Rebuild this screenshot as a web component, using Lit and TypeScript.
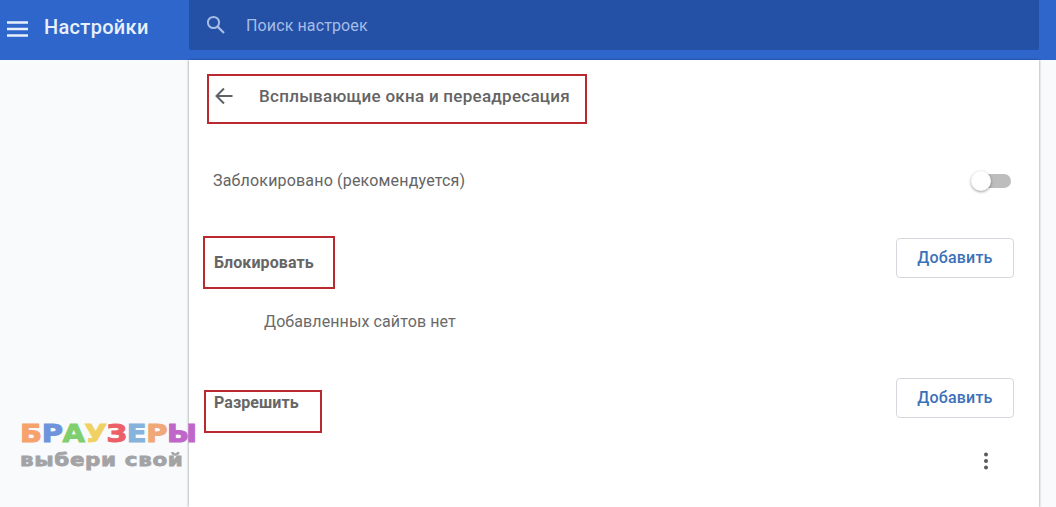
import { LitElement, html, css } from "lit";
import { customElement } from "lit/decorators.js";

const LETTERS: [string, string][] = [
  ["Б", "#f5a26b"], ["Р", "#6f94dc"], ["А", "#7fcf6f"], ["У", "#f0d264"],
  ["З", "#ec5f68"], ["Е", "#86b3dc"], ["Р", "#f0a878"], ["Ы", "#bf66c8"],
];

@customElement("app-root")
export class AppRoot extends LitElement {
  static styles = css`
    :host { display: block; width: 1056px; height: 507px; overflow: hidden; position: relative; background: #f8fafb; font-family: Roboto, "Liberation Sans", sans-serif; color: #646464; }
    .top { height: 60px; background: #2f66cb; display: flex; color: #fff; }
    .brand { width: 189px; display: flex; align-items: flex-start; box-sizing: border-box; padding: 16px 0 0 7px; gap: 15px; font-size: 20px; font-weight: 500; line-height: 22px; letter-spacing: 0.32px; color: #e8f0fc; }
    .brand svg { margin-top: 4px; display: block; }
    .search { width: 850px; height: 50px; background: #2450a6; border-radius: 0 0 2px 2px; display: flex; align-items: center; padding-left: 15px; gap: 18px; box-sizing: border-box; color: #a6bde6; font-size: 16px; letter-spacing: 0.12px; }
    .search svg { display: block; margin-left: -1px; margin-right: 1px; }
    .card { margin-left: 189px; width: 850px; height: 447px; background: #fff; box-shadow: -1px 0 2px rgba(0,0,0,.22), 1px 0 2px rgba(0,0,0,.22); box-sizing: border-box; display: flex; flex-direction: column; padding: 0 25px 0 25px; }
    .sub { height: 72px; display: flex; align-items: center; gap: 24px; font-size: 17px; font-weight: 500; letter-spacing: 0.27px; flex: none; }
    .sub svg { display: block; margin: -1px 0 0 -1px; }
    .row { display: flex; align-items: center; justify-content: space-between; flex: none; }
    .toggle-row { height: 42px; margin-top: 28px; font-size: 16px; letter-spacing: 0.18px; margin-left: -1px; }
    .toggle-row span { margin-top: -2px; }
    .switch { position: relative; width: 34px; height: 14px; border-radius: 7px; background: #bdbdbd; margin-right: 3px; }
    .knob { position: absolute; left: -6px; top: -3px; width: 20px; height: 20px; border-radius: 50%; background: #fff; box-shadow: 0 1px 3px rgba(0,0,0,.4); }
    .sec-a { margin-top: 36px; height: 40px; }
    .sec-b { height: 40px; }
    .sec-title { font-size: 16px; font-weight: 700; letter-spacing: 0.08px; color: #666; margin-top: 8px; }
    button { width: 118px; height: 40px; background: #fff; border: 1px solid #d4d8dd; border-radius: 4px; color: #3b71b8; font: 500 16px Roboto, "Liberation Sans", sans-serif; letter-spacing: 0.2px; padding: 0 0 2px; }
    .empty { height: 100px; flex: none; display: flex; align-items: center; padding: 0 0 14px 50px; font-size: 16px; letter-spacing: 0.1px; box-sizing: border-box; color: #6a6a6a; }
    .menu { display: flex; justify-content: flex-end; padding-right: 25px; margin-top: 34px; flex: none; }
    .menu svg { display: block; }
    .redbox { position: absolute; border: 2px solid #b92a30; box-sizing: border-box; }
    .r1 { left: 207px; top: 74px; width: 380px; height: 50px; }
    .r2 { left: 203px; top: 236px; width: 132px; height: 53px; }
    .r3 { left: 204px; top: 390px; width: 118px; height: 43px; }
    .mark { position: absolute; left: 20px; top: 419px; font-family: "DejaVu Sans", sans-serif; font-weight: 700; transform: scaleX(1.16); transform-origin: left top; }
    .mark .l1 { font-size: 25px; line-height: 29px; letter-spacing: -0.35px; white-space: nowrap; -webkit-text-stroke: 1px currentColor; }
    .mark .l2 { font-size: 18.5px; line-height: 23px; letter-spacing: 0.55px; color: #a3a3a6; white-space: nowrap; -webkit-text-stroke: 0.8px currentColor; }
  `;

  render() {
    return html`
      <div class="top">
        <div class="brand">
          <svg width="22" height="18" viewBox="0 0 22 18"><path d="M0 2.5h21M0 9h21M0 15.5h21" stroke="#e8f0fc" stroke-width="2.4" fill="none"/></svg>
          <span>Настройки</span>
        </div>
        <div class="search">
          <svg width="24" height="24" viewBox="0 0 24 24"><circle cx="10.5" cy="9.5" r="5.6" fill="none" stroke="#a6bde6" stroke-width="2"/><path d="M14.6 13.6 21 20" stroke="#a6bde6" stroke-width="2.2" fill="none"/></svg>
          <span>Поиск настроек</span>
        </div>
      </div>
      <div class="card">
        <div class="sub">
          <svg width="22" height="22" viewBox="0 0 22 22"><path d="M19.5 11H4M11 3.5 3.5 11l7.5 7.5" stroke="#5f6368" stroke-width="2" fill="none"/></svg>
          <span>Всплывающие окна и переадресация</span>
        </div>
        <div class="row toggle-row">
          <span>Заблокировано (рекомендуется)</span>
          <div class="switch"><div class="knob"></div></div>
        </div>
        <div class="row sec-a"><span class="sec-title">Блокировать</span><button>Добавить</button></div>
        <div class="empty">Добавленных сайтов нет</div>
        <div class="row sec-b"><span class="sec-title">Разрешить</span><button>Добавить</button></div>
        <div class="menu">
          <svg width="6" height="18" viewBox="0 0 6 18"><circle cx="3" cy="2.5" r="2" fill="#5a5a5a"/><circle cx="3" cy="9" r="2" fill="#5a5a5a"/><circle cx="3" cy="15.5" r="2" fill="#5a5a5a"/></svg>
        </div>
      </div>
      <div class="redbox r1"></div>
      <div class="redbox r2"></div>
      <div class="redbox r3"></div>
      <div class="mark">
        <div class="l1">${LETTERS.map(([c, col]) => html`<span style="color:${col}">${c}</span>`)}</div>
        <div class="l2">выбери свой</div>
      </div>
    `;
  }
}
